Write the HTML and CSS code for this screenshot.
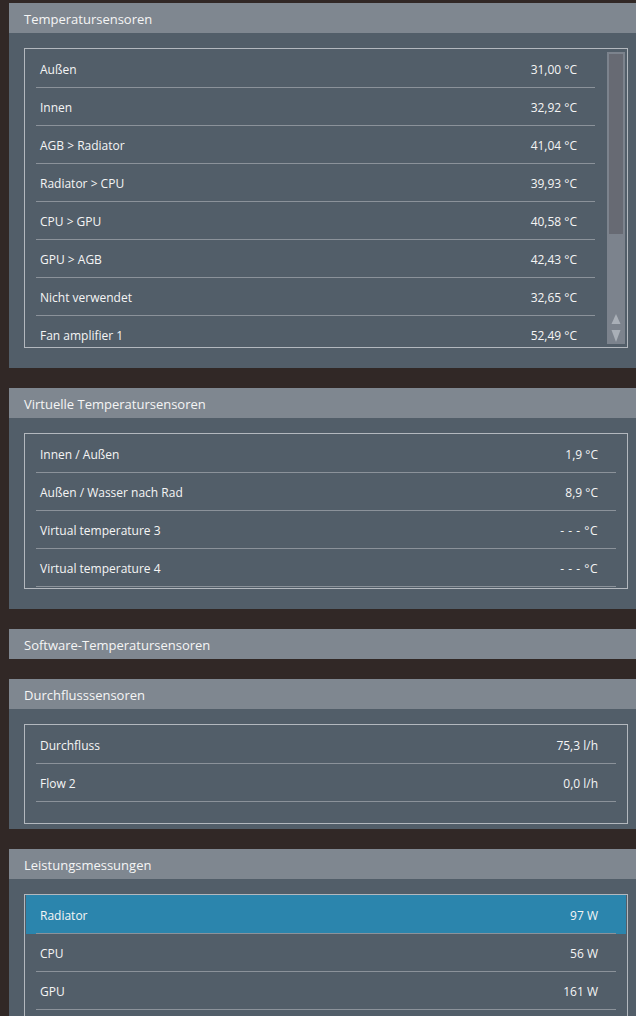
FILE: index.html
```html
<!DOCTYPE html>
<html lang="de">
<head>
<meta charset="utf-8">
<title>Sensoren</title>
<link rel="stylesheet" href="styles.css">
</head>
<body>
<div class="page">
  <section class="panel">
    <div class="panel-head">Temperatursensoren</div>
    <div class="panel-body">
      <div class="box box-scroll">
        <div class="list">
          <div class="row"><div class="row-in"><span>Außen</span><span>31,00 °C</span></div></div>
          <div class="row"><div class="row-in"><span>Innen</span><span>32,92 °C</span></div></div>
          <div class="row"><div class="row-in"><span>AGB &gt; Radiator</span><span>41,04 °C</span></div></div>
          <div class="row"><div class="row-in"><span>Radiator &gt; CPU</span><span>39,93 °C</span></div></div>
          <div class="row"><div class="row-in"><span>CPU &gt; GPU</span><span>40,58 °C</span></div></div>
          <div class="row"><div class="row-in"><span>GPU &gt; AGB</span><span>42,43 °C</span></div></div>
          <div class="row"><div class="row-in"><span>Nicht verwendet</span><span>32,65 °C</span></div></div>
          <div class="row"><div class="row-in"><span>Fan amplifier 1</span><span>52,49 °C</span></div></div>
        </div>
        <div class="scroll">
          <div class="track">
            <div class="thumb"></div>
            <svg class="arrows" width="18" height="32" viewBox="0 0 18 32">
              <polygon points="4.5,12 13.5,12 9,2" fill="#a9afb7"/>
              <polygon points="4.5,18 13.5,18 9,30" fill="#a9afb7"/>
            </svg>
          </div>
        </div>
      </div>
    </div>
  </section>

  <section class="panel">
    <div class="panel-head">Virtuelle Temperatursensoren</div>
    <div class="panel-body">
      <div class="box">
        <div class="row"><div class="row-in"><span>Innen / Außen</span><span>1,9 °C</span></div></div>
        <div class="row"><div class="row-in"><span>Außen / Wasser nach Rad</span><span>8,9 °C</span></div></div>
        <div class="row"><div class="row-in"><span>Virtual temperature 3</span><span class="dash">- - - °C</span></div></div>
        <div class="row"><div class="row-in"><span>Virtual temperature 4</span><span class="dash">- - - °C</span></div></div>
      </div>
    </div>
  </section>

  <section class="panel">
    <div class="panel-head">Software-Temperatursensoren</div>
  </section>

  <section class="panel">
    <div class="panel-head">Durchflusssensoren</div>
    <div class="panel-body body-tight">
      <div class="box box-min">
        <div class="row"><div class="row-in"><span>Durchfluss</span><span>75,3 l/h</span></div></div>
        <div class="row"><div class="row-in"><span>Flow 2</span><span>0,0 l/h</span></div></div>
      </div>
    </div>
  </section>

  <section class="panel">
    <div class="panel-head">Leistungsmessungen</div>
    <div class="panel-body">
      <div class="box box-tall">
        <div class="row selected"><div class="row-in"><span>Radiator</span><span>97 W</span></div></div>
        <div class="row"><div class="row-in"><span>CPU</span><span>56 W</span></div></div>
        <div class="row"><div class="row-in"><span>GPU</span><span>161 W</span></div></div>
      </div>
    </div>
  </section>
</div>
</body>
</html>
```

FILE: styles.css
```css
html, body {
  margin: 0;
  padding: 0;
  background: #312826;
}

body {
  width: 636px;
  height: 1016px;
  overflow: hidden;
  font-family: "Open Sans", "Noto Sans", sans-serif;
  color: #f5f5f5;
}

.page {
  padding: 3px 0 0 9px;
}

.panel {
  margin-bottom: 20px;
}

.panel-head {
  height: 30px;
  box-sizing: border-box;
  padding: 2px 0 0 15px;
  line-height: 28px;
  font-size: 13px;
  background: #7f8790;
}

.panel-body {
  background: #525e69;
  padding: 15px 8px 20px 15px;
}

.body-tight {
  padding-bottom: 5px;
}

.box {
  border: 1px solid #b3b8be;
  padding: 1px;
}

.box-min {
  min-height: 100px;
  box-sizing: border-box;
}

.box-tall {
  min-height: 160px;
  box-sizing: border-box;
}

.box-scroll {
  height: 300px;
  box-sizing: border-box;
  display: flex;
}

.list {
  flex: 1;
  overflow: hidden;
}

.row-in {
  margin: 0 10px;
  height: 38px;
  box-sizing: border-box;
  border-bottom: 1px solid #8b929a;
  padding: 2px 18px 0 4px;
  line-height: 35px;
  font-size: 12px;
  display: flex;
  justify-content: space-between;
  white-space: nowrap;
}

.selected {
  background: #2b85ad;
  box-shadow: 0 -1px 0 #2b85ad;
}

.dash {
  letter-spacing: 0.5px;
}

.scroll {
  width: 21px;
  padding: 2px 1px 2px 2px;
  box-sizing: border-box;
  display: flex;
}

.track {
  flex: 1;
  background: #7c838d;
  display: flex;
  flex-direction: column;
  justify-content: space-between;
}

.thumb {
  height: 180px;
  margin: 2px 2px 0;
  background: #676a73;
}

.arrows {
  display: block;
}
```
